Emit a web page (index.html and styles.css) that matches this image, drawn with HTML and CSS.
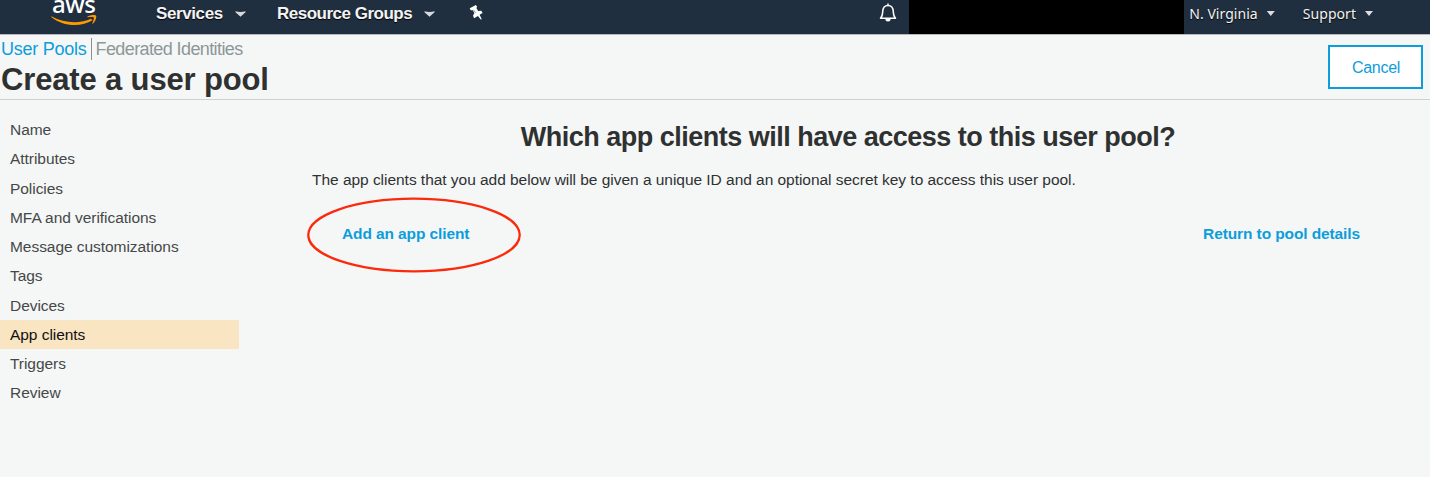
FILE: index.html
```
<!DOCTYPE html>
<html lang="en">
<head>
<meta charset="utf-8">
<title>Create a user pool</title>
<link rel="stylesheet" href="styles.css">
</head>
<body>
<nav class="topbar">
  <a class="logo" aria-label="AWS home">
    <span class="logo-text">aws</span>
    <svg class="logo-smile" width="46" height="11" viewBox="0 0 46 11"><path d="M.4 1.200C13.500 8.500 29 8.800 40 3.800l1.500 1.400C30 12.600 11 11.200.2 1.900Z" fill="#f90"/><path d="M36.500 1.500C39.500-.4 44-.3 45 .5c.8 1.500-.3 5.800-3 8-.6.400-.9.200-.7-.3.700-1.800 2-4.900 1.400-5.700-.6-.8-3.800-.5-5.800-.3-.6 0-.8-.3-.4-.7Z" fill="#f90"/></svg>
  </a>
  <a class="menu services">Services <svg class="chev" width="11" height="6" viewBox="0 0 11 6"><path d="M.5.300Q5.500 1.500 10.500.300V1.300L5.500 5.800.5 1.300Z"/></svg></a>
  <a class="menu groups">Resource Groups <svg class="chev" width="11" height="6" viewBox="0 0 11 6"><path d="M.5.300Q5.500 1.500 10.500.300V1.300L5.500 5.800.5 1.300Z"/></svg></a>
  <svg class="pin" width="14" height="16" viewBox="0 0 14 16"><path d="M.7 3.200 6.900 0l1.200 1.800-.7 1.200 1.700 2.900 3.200-.1 1.300 2.300-3 1.700 2.200 4.500-1 .3-2.900-3.600-3.800 2.200-1.100-2.400 1.300-2.600L3.900 5.200H1.700Z" fill="#fff"/><path d="m4.600 4.800 2 3.300" stroke="#7c8792" stroke-width=".8"/></svg>
  <svg class="bell" width="18" height="20" viewBox="0 0 18 20"><path d="M1.500 15.200c2-1.700 2-3.200 2.200-6.500C3.900 4.800 5.800 2.500 9 2.500s5.100 2.300 5.300 6.200c.2 3.300.2 4.800 2.200 6.500ZM9 2.500V1" fill="none" stroke="#fff" stroke-width="1.500" stroke-linecap="round" stroke-linejoin="round"/><path d="M6.400 16h5.200a2.600 2.500 0 0 1-5.200 0Z" fill="#fff"/></svg>
  <div class="account"></div>
  <a class="small-menu">N. Virginia</a><i class="caret"></i>
  <a class="small-menu support">Support</a><i class="caret"></i>
</nav>
<header class="header">
  <div>
    <div class="crumbs"><a class="crumb-active">User Pools</a><a class="crumb">Federated Identities</a></div>
    <h1 class="title">Create a user pool</h1>
  </div>
  <button class="cancel">Cancel</button>
</header>
<div class="content">
  <ul class="steps">
    <li>Name</li>
    <li>Attributes</li>
    <li>Policies</li>
    <li>MFA and verifications</li>
    <li>Message customizations</li>
    <li>Tags</li>
    <li>Devices</li>
    <li class="current">App clients</li>
    <li>Triggers</li>
    <li>Review</li>
  </ul>
  <main class="main">
    <h2 class="question">Which app clients will have access to this user pool?</h2>
    <p class="desc">The app clients that you add below will be given a unique ID and an optional secret key to access this user pool.</p>
    <div class="actions">
      <div class="add"><a class="link add-link">Add an app client</a><svg class="ring" width="216" height="76" viewBox="0 0 216 76"><ellipse cx="108" cy="38" rx="105.700" ry="36.300" fill="none" stroke="#fc2a0c" stroke-width="2.300"/></svg></div>
      <a class="link return-link">Return to pool details</a>
    </div>
  </main>
</div>
</body>
</html>
```

FILE: styles.css
```
* { box-sizing: border-box; }
body {
  margin: 0;
  height: 477px;
  overflow: hidden;
  background: #f5f7f7;
  color: #2f3131;
  font-family: "Liberation Sans", Arial, sans-serif;
}
a { white-space: nowrap; }
.topbar {
  display: flex;
  height: 35px;
  overflow: hidden;
  background: #202f40;
  border-bottom: 1px solid #b9b6bf;
  color: #f3f3f3;
}
.logo {
  display: flex;
  flex-direction: column;
  width: 104px;
  height: 34px;
  padding-left: 51px;
}
.logo-text {
  height: 24px;
  margin-top: -8px;
  padding-left: 1px;
  font: 500 24px/24px "Noto Sans", sans-serif;
  letter-spacing: -.4px;
  color: #fff;
}
.logo-smile { margin-top: -1px; }
.menu {
  display: flex;
  align-items: center;
  height: 27px;
  font-size: 17px;
  font-weight: bold;
  letter-spacing: -.4px;
  text-shadow: 0 1px 1px #000;
}
.services { margin-left: 52px; width: 121px; }
.groups { width: 192px; letter-spacing: -.5px; }
.chev { margin-left: 12px; fill: #d5d8dc; }
.pin { margin-top: 5px; flex: none; }
.bell { margin: 3px 12px 0 auto; flex: none; }
.account { width: 275px; height: 34px; background: #000; }
.small-menu {
  height: 27px;
  margin-left: 5px;
  font: 14px/27px "Noto Sans", sans-serif;
  letter-spacing: .05px;
  text-shadow: 0 1px 1px #000;
}
.support { margin-left: 28px; }
.caret {
  width: 8px;
  height: 5px;
  margin: 11px 0 0 9px;
  background: #ddd;
  clip-path: polygon(0 0, 100% 0, 50% 100%);
}
.support + .caret { margin-right: 57px; }
.header {
  display: flex;
  justify-content: space-between;
  height: 65px;
  padding: 3px 7px 0 1px;
  border-bottom: 1px solid #cfd1d1;
}
.crumbs { display: flex; height: 22px; font-size: 18px; line-height: 22px; }
.crumb-active { padding-right: 4px; color: #0d9ddb; border-right: 1px solid #888f90; letter-spacing: -.25px; }
.crumb { padding-left: 4px; color: #8d9798; letter-spacing: -.6px; }
.title { margin: 0; font-size: 31px; line-height: 39px; letter-spacing: -.15px; }
.cancel {
  width: 95px;
  height: 44px;
  margin-top: 7px;
  padding: 1px 0 0 1px;
  border: 2px solid #0d9ddb;
  background: #fff;
  color: #0d9ddb;
  font: 16px "Liberation Sans", Arial, sans-serif;
  letter-spacing: -.3px;
}
.content { display: flex; }
.steps { width: 239px; margin: 0; padding: 15px 0 0; list-style: none; }
.steps li {
  height: 29.250px;
  padding-left: 10px;
  font-size: 15.500px;
  line-height: 30.500px;
  letter-spacing: -.05px;
  color: #464848;
}
.steps .current { background: #fae5c3; color: #101010; }
.main { flex: 1; padding: 20px 46px 0 73px; }
.question { margin: 0; font-size: 27px; line-height: 34px; letter-spacing: -.5px; text-align: center; }
.desc { margin: 16px 0 0; font-size: 15.500px; line-height: 20px; letter-spacing: -.035px; white-space: nowrap; }
.actions {
  display: flex;
  justify-content: space-between;
  margin-top: 34px;
  padding: 0 24px 0 30px;
}
.link { color: #0d9ddb; font-size: 15.500px; font-weight: bold; line-height: 20px; letter-spacing: -.11px; }
.add { position: relative; }
.ring { position: absolute; left: -36px; top: -27px; }
```
